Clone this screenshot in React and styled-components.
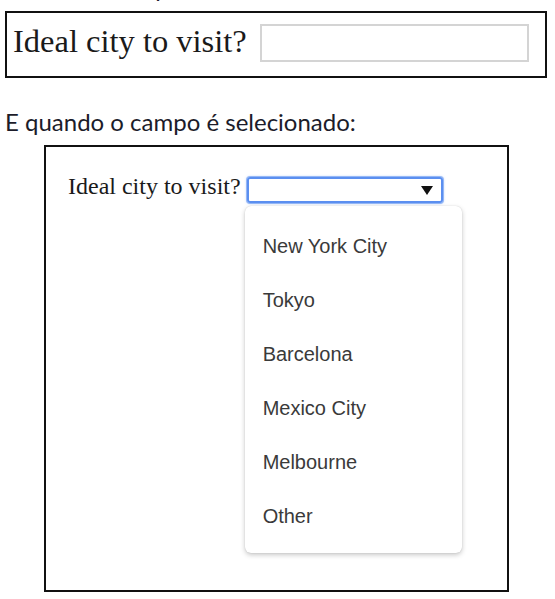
import React from 'react'
import styled, { createGlobalStyle } from 'styled-components'

const cities = ['New York City', 'Tokyo', 'Barcelona', 'Mexico City', 'Melbourne', 'Other']

const GlobalStyle = createGlobalStyle`
  html, body {
    margin: 0;
    padding: 0;
    background: #fff;
    overflow: hidden;
  }
`

const Page = styled.div`
  width: 555px;
  height: 599px;
  overflow: hidden;
  padding-left: 5px;
  box-sizing: border-box;
  font-family: "Lato", "Noto Sans", sans-serif;
  color: #1c1c2a;
`

const Lead = styled.p`
  margin: -27px 0 0;
  font-size: 24px;
  line-height: 30px;
  height: 30px;
`

const Caption = styled.p`
  margin: 29px 0 0;
  font-size: 24px;
  line-height: 30px;
`

const Frame = styled.div`
  box-sizing: border-box;
  border: 2px solid #111;
  display: flex;
  align-items: flex-start;
`

const PlainFrame = styled(Frame)`
  margin-top: 8px;
  width: 542px;
  height: 67px;
  padding: 11px 0 0 6px;
`

const FocusFrame = styled(Frame)`
  margin: 8px 0 0 39px;
  width: 465px;
  height: 447px;
  padding: 27px 0 0 22px;
`

const Label = styled.span`
  font-family: "Liberation Serif", "Times New Roman", serif;
  font-size: ${p => p.$size}px;
  line-height: ${p => p.$size}px;
  color: #1a1a1a;
  white-space: nowrap;
  margin-top: ${p => p.$offset || 0}px;
`

const TextInput = styled.div`
  box-sizing: border-box;
  margin-left: 13px;
  width: 269px;
  height: 38px;
  border: 2px solid #d4d4d4;
  background: #fff;
`

const Field = styled.div`
  position: relative;
  margin: 3px 0 0 6px;
`

const SelectBox = styled.div`
  box-sizing: border-box;
  width: 196px;
  height: 26px;
  border: 2px solid #5b8ff0;
  border-radius: 3px;
  box-shadow: 0 0 0 1px rgba(91, 143, 240, 0.55), 0 0 3px rgba(80, 140, 245, 0.6);
  display: flex;
  align-items: center;
  justify-content: flex-end;
  padding-right: 8px;
`

const Menu = styled.ul`
  position: absolute;
  top: calc(100% + 3px);
  left: -2px;
  width: 217px;
  margin: 0;
  padding: 13px 0 10px;
  box-sizing: border-box;
  list-style: none;
  background: #fff;
  border-radius: 6px;
  box-shadow: 0 2px 5px rgba(0, 0, 0, 0.22), 0 0 1px rgba(0, 0, 0, 0.2);
`

const Option = styled.li`
  height: 54px;
  line-height: 54px;
  padding-left: 18px;
  font-family: "Liberation Sans", Arial, sans-serif;
  font-size: 20px;
  color: #3a3a3a;
`

const Arrow = () => (
  <svg width="12" height="9" viewBox="0 0 12 9">
    <polygon points="0,0 12,0 6,9" fill="#111" />
  </svg>
)

export default function App() {
  return (
    <Page>
      <GlobalStyle />
      <Lead>Assim é o campo:</Lead>
      <PlainFrame>
        <Label $size={32.5} $offset={1}>Ideal city to visit?</Label>
        <TextInput />
      </PlainFrame>
      <Caption>E quando o campo é selecionado:</Caption>
      <FocusFrame>
        <Label $size={24}>Ideal city to visit?</Label>
        <Field>
          <SelectBox>
            <Arrow />
          </SelectBox>
          <Menu>
            {cities.map(city => (
              <Option key={city}>{city}</Option>
            ))}
          </Menu>
        </Field>
      </FocusFrame>
    </Page>
  )
}
